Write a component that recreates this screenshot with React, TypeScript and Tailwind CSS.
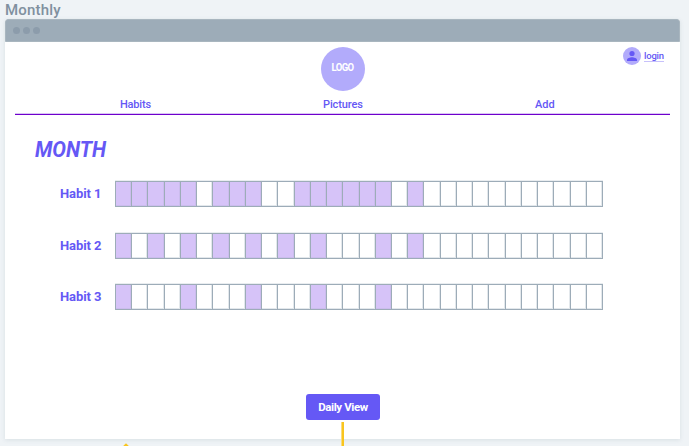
const DAYS = Array.from({ length: 30 }, (_, i) => i + 1);

const HABITS = [
  { name: "Habit 1", done: [1, 2, 3, 4, 5, 7, 8, 9, 12, 13, 14, 15, 16, 17, 19], gap: "mb-[26px]" },
  { name: "Habit 2", done: [1, 3, 5, 7, 9, 11, 13, 17, 19], gap: "mb-[25px]" },
  { name: "Habit 3", done: [1, 5, 9, 13, 17], gap: "" },
];

function TitleBar() {
  return (
    <div className="flex h-[23px] items-center gap-[2.5px] rounded-t-[3px] border border-[#a9b6bf] bg-[#9dacb8] pl-[6.5px]">
      <span className="size-[7.5px] rounded-full bg-[#8c9cab]" />
      <span className="size-[7.5px] rounded-full bg-[#8c9cab]" />
      <span className="size-[7.5px] rounded-full bg-[#8c9cab]" />
    </div>
  );
}

function Header() {
  return (
    <header className="mx-[10px] h-[73px] border-b border-[#6f00cc] shadow-[inset_0_-1px_0_#d9c5f4]">
      <div className="grid h-[53px] grid-cols-[1fr_44px_1fr] pt-[5px]">
        <span />
        <div className="flex size-[44px] items-center justify-center rounded-full bg-[#b2abfb] pb-[3px] text-[9.5px] leading-none font-bold text-white">
          <span className="scale-y-110 -tracking-[0.55px]">LOGO</span>
        </div>
        <a className="mr-[6px] flex h-[18px] items-center justify-self-end">
          <svg viewBox="0 0 18 18" className="mr-[3px] size-[18px]">
            <circle cx="9" cy="9" r="9" fill="#b2abfb" />
            <circle cx="9" cy="6.5" r="2.6" fill="#6558f5" />
            <path d="M4 14v-1.1c0-1.7 3-2.7 5-2.7s5 1 5 2.7V14z" fill="#6558f5" />
          </svg>
          <span className="h-3 w-5 border-b border-[#c7c1fb] text-[9.5px] leading-[11px] font-medium -tracking-[0.2px] whitespace-nowrap">
            login
          </span>
        </a>
      </div>
      <nav className="flex text-[11px] leading-[19px] font-medium">
        <span className="w-[308px] pl-[105px] -tracking-[0.2px]">Habits</span>
        <span className="w-[212px] -tracking-[0.1px]">Pictures</span>
        <span>Add</span>
      </nav>
    </header>
  );
}

function HabitRow({ name, done, gap }: (typeof HABITS)[number]) {
  return (
    <div className={"flex h-[26px] items-center " + gap}>
      <span className="w-[55px] pb-px text-[13px] leading-4 font-bold whitespace-nowrap -tracking-[0.1px]">{name}</span>
      <div className="flex h-[26px] w-[488px] border border-r-0 border-[#9dacb8] shadow-[0_-1px_0_#e9edf0]">
        {DAYS.map((day) => (
          <span
            key={day}
            className={
              "flex-1 border-r border-[#9dacb8] " +
              (done.includes(day)
                ? "bg-[#d6c3f8] shadow-[inset_-1px_-1px_0_#cbbced]"
                : "bg-white shadow-[inset_-1px_-1px_0_#e3e8ec]")
            }
          />
        ))}
      </div>
    </div>
  );
}

export default function App() {
  return (
    <div className="h-[446px] w-[689px] overflow-hidden bg-[#eff3f6] font-['Roboto','Liberation_Sans',sans-serif] text-[#6558f5]">
      <h1 className="h-[19px] pl-[5px] text-[15px] leading-[20px] font-medium tracking-[0.2px] text-[#80909f]">Monthly</h1>
      <main className="relative ml-[5px] h-[420px] w-[675px] rounded-t-[3px] bg-white shadow-[0_1px_4px_rgba(90,115,130,0.15)]">
        <TitleBar />
        <Header />
        <h2 className="h-[66px] pt-[23px] pl-[30px] text-[22px] leading-[24px] font-bold italic">
          <span className="inline-block origin-left scale-x-[0.93]">MONTH</span>
        </h2>
        <section className="pl-[55px]">
          {HABITS.map((habit) => (
            <HabitRow key={habit.name} {...habit} />
          ))}
        </section>
        <button className="mt-[84px] ml-[301px] flex h-[26px] w-[74px] items-center justify-center rounded-[3px] bg-[#6558f5] pt-px text-[11.5px] font-bold -tracking-[0.4px] text-white">
          Daily View
        </button>
        <span className="absolute top-[403px] left-[336px] h-[24px] w-[3px] border-l border-[#fbdc7c] bg-[#f9c51e]" />
        <span className="absolute top-[425px] left-[119px] size-[4px] rotate-45 bg-[#f9c51e]" />
      </main>
    </div>
  );
}
